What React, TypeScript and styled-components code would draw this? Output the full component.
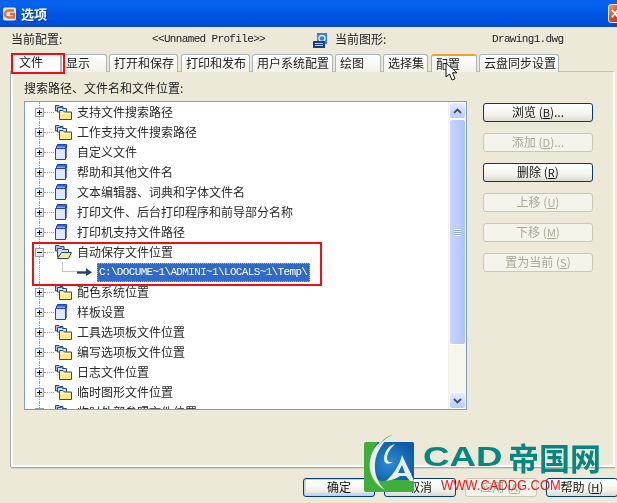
import React from "react";
import styled, { createGlobalStyle } from "styled-components";

const Global = createGlobalStyle`
  html, body {
    margin: 0;
    padding: 0;
    background: #ece9d8;
  }
  body {
    font-family: "Noto Sans CJK SC", "Liberation Sans", sans-serif;
    font-size: 12px;
    color: #222;
  }
`;

// the source capture is a soft, upscaled screenshot
const Window = styled.div`
  position: relative;
  width: 617px;
  height: 503px;
  overflow: hidden;
  background: #ece9d8;
  display: flex;
  flex-direction: column;
  filter: blur(0.3px);
`;

const TitleBar = styled.div`
  height: 27px;
  flex: none;
  display: flex;
  align-items: center;
  padding-left: 2px;
  background: linear-gradient(180deg, #0a5fe6 0%, #0466f0 12%, #0055e5 50%, #0050dc 85%, #0a46c0 100%);
`;

const TitleText = styled.span`
  margin-left: 3px;
  color: #fff;
  font-size: 13px;
  font-weight: 700;
  line-height: 27px;
  text-shadow: 1px 1px 0 #0a3aa0;
`;

const CloseButton = styled.div`
  margin-left: auto;
  width: 12px;
  height: 19px;
  margin-right: -3px;
  border: 1px solid #f4e4dc;
  border-radius: 3px 0 0 3px;
  background: linear-gradient(135deg, #e89a78, #d8502c 55%, #c23c18);
  display: flex;
  align-items: center;
  padding-left: 2px;
  box-sizing: border-box;
`;

const ProfileRow = styled.div`
  height: 27px;
  flex: none;
  display: grid;
  grid-template-columns: 141px 160px 23px 157px auto;
  align-items: center;
  padding-left: 11px;
`;

const ProfileLabel = styled.span`
  padding-bottom: 4px;
`;

const MonoText = styled.span`
  font-family: "Liberation Mono", "Noto Sans CJK SC", monospace;
  font-size: 11px;
  letter-spacing: -0.65px;
  color: #222;
  white-space: nowrap;
`;

const ProfileValue = styled(MonoText)`
  padding-bottom: 3px;
`;

const TabStrip = styled.div`
  height: 17px;
  flex: none;
  display: flex;
  padding-left: 12px;
  position: relative;
  z-index: 1;
`;

const Tab = styled.div<{ $width: number; $gap: number; $active?: boolean; $hot?: boolean }>`
  width: ${(p) => p.$width}px;
  margin-right: ${(p) => p.$gap}px;
  height: ${(p) => (p.$active ? 20 : 18)}px;
  margin-top: ${(p) => (p.$active ? -1 : 0)}px;
  box-sizing: border-box;
  padding-left: ${(p) => (p.$active ? 6 : 4)}px;
  border: 1px solid #a8b4bc;
  border-bottom: none;
  border-top: ${(p) => (p.$hot ? "2px solid #f0a030" : "1px solid #a8b4bc")};
  border-radius: 3px 3px 0 0;
  background: ${(p) => (p.$active ? "#fcfcfe" : "linear-gradient(180deg, #fff, #f2f1e8)")};
  line-height: 16px;
  white-space: nowrap;
`;

const Panel = styled.div`
  height: 396px;
  flex: none;
  box-sizing: border-box;
  margin: 0 2px 0 11px;
  padding: 10px 11px 0 11px;
  background: #ece9d8;
  border-top: 1px solid #b8c0c4;
  border-left: 2px solid #fff;
  border-right: 2px solid #fff;
  border-bottom: 2px solid #fff;
  box-shadow: -1px 0 0 #a8aca8, 0 1px 0 #a8aca8, 0 2px 0 #d4d2c4;
`;

const PanelLabel = styled.div`
  height: 19px;
  line-height: 12px;
  white-space: nowrap;
`;

const PanelBody = styled.div`
  display: flex;
  align-items: flex-start;
`;

const TreeBox = styled.div`
  width: 443px;
  height: 309px;
  box-sizing: border-box;
  border: 1px solid #7f9db9;
  background: #fff;
  display: flex;
  overflow: hidden;
`;

const TreeList = styled.div`
  flex: 1;
  overflow: hidden;
`;

const Row = styled.div`
  position: relative;
  height: 20px;
  display: flex;
  align-items: center;
  padding-left: 10px;
  white-space: nowrap;
  &::before {
    content: "";
    position: absolute;
    left: 14px;
    top: 0;
    bottom: 0;
    border-left: 1px dotted #a0a0a0;
  }
`;

const Toggle = styled.span`
  position: relative;
  z-index: 1;
  width: 9px;
  height: 9px;
  flex: none;
  box-sizing: border-box;
  border: 1px solid #8ea0b4;
  background: linear-gradient(135deg, #fff, #d8d8cc);
  display: flex;
  align-items: center;
  justify-content: center;
`;

const Dash = styled.span`
  width: 10px;
  flex: none;
  border-top: 1px dotted #a0a0a0;
`;

const RowLabel = styled.span`
  margin-left: 4px;
  padding-bottom: 2px;
  color: #2a2a2a;
`;

const PathRow = styled(Row)`
  padding-left: 37px;
`;

const Elbow = styled.span`
  width: 15px;
  height: 10px;
  margin-top: -10px;
  flex: none;
  border-left: 1px solid #c4c4c4;
  border-bottom: 1px solid #c4c4c4;
  box-sizing: border-box;
`;

const PathText = styled(MonoText)`
  margin-left: 4px;
  width: 213px;
  height: 19px;
  line-height: 18px;
  padding-left: 2px;
  box-sizing: border-box;
  background: #3169c6;
  color: #fff;
  outline: 1px dotted #c8a878;
  outline-offset: -1px;
`;

const ScrollBar = styled.div`
  width: 17px;
  flex: none;
  display: flex;
  flex-direction: column;
  background: #f6f5ee;
  border-left: 1px solid #f0efe6;
`;

const ScrollArrow = styled.div`
  height: 17px;
  flex: none;
  box-sizing: border-box;
  border: 1px solid #fff;
  border-radius: 3px;
  background: linear-gradient(180deg, #e4ecff, #b8ccf8);
  display: flex;
  align-items: center;
  justify-content: center;
`;

const ScrollThumb = styled.div`
  height: 226px;
  flex: none;
  box-sizing: border-box;
  border: 1px solid #fff;
  border-radius: 3px;
  background: linear-gradient(90deg, #c4d4fc, #b8ccfa 60%, #aec4f4);
  display: flex;
  align-items: center;
  justify-content: center;
`;

const ScrollGrip = styled.div`
  width: 7px;
  height: 7px;
  background: repeating-linear-gradient(180deg, #eef2fe 0 1px, #8faae8 1px 2px);
`;

const ScrollTrack = styled.div`
  flex: 1;
`;

const SideButtons = styled.div`
  margin-left: 16px;
  margin-top: 2px;
  width: 110px;
  display: flex;
  flex-direction: column;
  gap: 11px;
`;

const XpButton = styled.div<{ $disabled?: boolean; $width?: number }>`
  width: ${(p) => (p.$width ? `${p.$width}px` : "100%")};
  height: 19px;
  box-sizing: border-box;
  border: 1px solid ${(p) => (p.$disabled ? "#c9c7ba" : "#003c74")};
  border-radius: 3px;
  background: ${(p) => (p.$disabled ? "#f5f4ea" : "linear-gradient(180deg, #fff 0%, #f4f4ee 60%, #dcdad0 100%)")};
  color: ${(p) => (p.$disabled ? "#a8a898" : "#111")};
  font-size: 12px;
  line-height: 15px;
  text-align: center;
  white-space: nowrap;
  flex: none;
`;

const Key = styled.u`
  font-size: 11px;
`;

const Footer = styled.div`
  flex: none;
  display: flex;
  justify-content: flex-start;
  gap: 9px;
  padding: 11px 0 0 303px;
`;

const DefaultButton = styled(XpButton)`
  box-shadow: inset 0 0 0 1px #b8d0f4, inset 0 -1px 0 2px #c4d8f8;
`;

const RedBox = styled.div<{ $x: number; $y: number; $w: number; $h: number }>`
  position: absolute;
  left: ${(p) => p.$x}px;
  top: ${(p) => p.$y}px;
  width: ${(p) => p.$w}px;
  height: ${(p) => p.$h}px;
  box-sizing: border-box;
  border: 2px solid #ee0f14;
  pointer-events: none;
  z-index: 3;
`;

const Cursor = styled.svg`
  position: absolute;
  left: 445px;
  top: 62px;
  z-index: 4;
`;

const Watermark = styled.div`
  position: absolute;
  left: 364px;
  top: 435px;
  z-index: 5;
  display: flex;
  align-items: flex-start;
`;

const WatermarkBrand = styled.div`
  position: relative;
  margin-left: 7px;
  margin-top: 3px;
  display: flex;
  align-items: center;
  color: #05877f;
  font-family: "Noto Sans CJK SC", "Liberation Sans", sans-serif;
  font-size: 31px;
  font-weight: 700;
  line-height: 38px;
  white-space: nowrap;
`;

const WatermarkLatin = styled.span`
  display: inline-block;
  width: 85px;
  font-family: "Liberation Sans", sans-serif;
  font-size: 27px;
  transform: scaleX(1.36);
  transform-origin: left center;
`;

const WatermarkUrl = styled.div`
  position: absolute;
  left: 18px;
  top: 39px;
  color: #f01c24;
  font-family: "Liberation Sans", sans-serif;
  font-size: 15px;
  font-weight: 400;
  line-height: 16px;
  transform: scaleX(0.86);
  transform-origin: left center;
`;

const PlusIcon = () => (
  <svg width="7" height="7" viewBox="0 0 7 7">
    <path d="M1 3.5h5M3.5 1v5" stroke="#111" strokeWidth="1" />
  </svg>
);

const MinusIcon = () => (
  <svg width="7" height="7" viewBox="0 0 7 7">
    <path d="M1 3.5h5" stroke="#111" strokeWidth="1" />
  </svg>
);

const FolderIcon = () => (
  <svg width="19" height="18" viewBox="0 0 19 18" style={{ flex: "none" }}>
    <path d="M1.5 8V2.5h3.5l1 1h3v4z" fill="#aebfdc" stroke="#2c4c80" />
    <path d="M3.5 9V4.5h4l1 1h4v4z" fill="#cfdcf0" stroke="#2c4c80" />
    <path d="M5.5 7.5h3.5l1.5 1.5h7v7.5h-12z" fill="#fbe98c" stroke="#2c4c80" />
    <path d="M6.5 10.5h10" stroke="#fff8c8" />
  </svg>
);

const OpenFolderIcon = () => (
  <svg width="19" height="18" viewBox="0 0 19 18" style={{ flex: "none" }}>
    <path d="M1.5 8V2.5h3.5l1 1h4v4z" fill="#aebfdc" stroke="#2c4c80" />
    <path d="M3.5 14V5.5h4l1 1h6v3h-5z" fill="#cfdcf0" stroke="#2c4c80" />
    <path d="M3.5 15.5l4-6h10l-3 6z" fill="#fbe98c" stroke="#2c4c80" />
  </svg>
);

const DocIcon = () => (
  <svg width="19" height="18" viewBox="0 0 19 18" style={{ flex: "none" }}>
    <path d="M3.5 1.5h9v4h-9z" fill="#5c7ce8" stroke="#1c40c0" />
    <path d="M2.5 3h9v3h-9z" fill="#94b0f4" stroke="#1c40c0" />
    <path d="M1.5 5.5h10v11h-10z" fill="#dfe8ff" stroke="#1c40c0" />
    <path d="M12.5 5v10" stroke="#5c7ce8" />
  </svg>
);

const ArrowIcon = () => (
  <svg width="16" height="10" viewBox="0 0 16 10" style={{ flex: "none" }}>
    <path d="M0 5.5h10" stroke="#24406c" strokeWidth="2.4" />
    <path d="M9 1l6 4.5-6 3.5z" fill="#24406c" />
  </svg>
);

const AppIcon = () => (
  <svg width="16" height="16" viewBox="0 0 16 16">
    <rect x="1" y="1.5" width="13" height="13" rx="2" fill="#e8eef8" />
    <path d="M12 4.5H6.5a3.5 3.5 0 0 0 0 7H12V8H8" fill="none" stroke="#e07030" strokeWidth="2.4" />
  </svg>
);

const DwgIcon = () => (
  <svg width="17" height="17" viewBox="0 0 17 17">
    <path d="M5 1h10v11H5z" fill="#3c7cdc" />
    <circle cx="10" cy="6.5" r="3" fill="none" stroke="#e8f0ff" strokeWidth="1.4" />
    <path d="M1 9h12v7H1z" fill="#1c3c90" />
    <path d="M3 11.5h8M3 13.5h8" stroke="#b8c8f0" strokeWidth="1" />
  </svg>
);

const CloseGlyph = () => (
  <svg width="9" height="11" viewBox="0 0 9 11">
    <path d="M1 1.5l7 8M8 1.5l-7 8" stroke="#fff" strokeWidth="2" />
  </svg>
);

const UpGlyph = () => (
  <svg width="9" height="6" viewBox="0 0 9 6">
    <path d="M1 5l3.5-3.5L8 5" fill="none" stroke="#3c4c78" strokeWidth="1.8" />
  </svg>
);

const DownGlyph = () => (
  <svg width="9" height="6" viewBox="0 0 9 6">
    <path d="M1 1l3.5 3.5L8 1" fill="none" stroke="#3c4c78" strokeWidth="1.8" />
  </svg>
);

const CadLogo = () => (
  <svg width="52" height="58" viewBox="0 0 52 58" style={{ flex: "none" }}>
    <defs>
      <radialGradient id="logoBlue" cx="0.45" cy="0.55" r="0.6">
        <stop offset="0" stopColor="#2c8cd0" />
        <stop offset="1" stopColor="#0f5aa8" />
      </radialGradient>
    </defs>
    <rect x="0" y="7" width="50" height="50" rx="2" fill="#3fae3a" />
    <path d="M14 7h34a2 2 0 0 1 2 2v36H24C11 49 5 39 6 27 7 19 10 12 14 7z" fill="url(#logoBlue)" />
    <path d="M50 45v6l-12-1-8-5z" fill="#3fae3a" />
    <path d="M21 55C8 48 3 34 7 21 10 11 18 3 29 0 19 6 12 17 11 28c-1 11 3 20 10 27z" fill="#e8f0e8" />
    <path d="M13 14C16 8 21 3 29 0c-6 1-12 5-16 14z" fill="#3fae3a" />
    <path d="M31 9c-6 1-11 8-11 15 0 5 5 6 9 3-3 1-6 0-6-4 0-5 4-10 8-14z" fill="#e8f0e8" />
    <path d="M38 20c-2 9-8 19-16 26 7-1 11-3 14-5h6l4 5h4C47 38 42 29 38 20z" fill="#e8f0f4" />
    <path d="M38 30l3 8h-7z" fill="#1a68b4" />
  </svg>
);

type Kind = "folder" | "doc";

const groupA: { label: string; kind: Kind }[] = [
  { label: "支持文件搜索路径", kind: "folder" },
  { label: "工作支持文件搜索路径", kind: "folder" },
  { label: "自定义文件", kind: "doc" },
  { label: "帮助和其他文件名", kind: "doc" },
  { label: "文本编辑器、词典和字体文件名", kind: "doc" },
  { label: "打印文件、后台打印程序和前导部分名称", kind: "doc" },
  { label: "打印机支持文件路径", kind: "doc" },
];

const groupB: { label: string; kind: Kind }[] = [
  { label: "配色系统位置", kind: "folder" },
  { label: "样板设置", kind: "doc" },
  { label: "工具选项板文件位置", kind: "folder" },
  { label: "编写选项板文件位置", kind: "folder" },
  { label: "日志文件位置", kind: "folder" },
  { label: "临时图形文件位置", kind: "folder" },
  { label: "临时外部参照文件位置", kind: "folder" },
];

const tabs = [
  { label: "文件", width: 49, gap: 0, active: true },
  { label: "显示", width: 46, gap: 2 },
  { label: "打开和保存", width: 69, gap: 3 },
  { label: "打印和发布", width: 69, gap: 2 },
  { label: "用户系统配置", width: 81, gap: 2 },
  { label: "绘图", width: 46, gap: 2 },
  { label: "选择集", width: 45, gap: 3 },
  { label: "配置", width: 46, gap: 2, hot: true },
  { label: "云盘同步设置", width: 80, gap: 0 },
];

const sideButtons = [
  { label: "浏览", key: "B", dots: true },
  { label: "添加", key: "D", dots: true, disabled: true },
  { label: "删除", key: "R" },
  { label: "上移", key: "U", disabled: true },
  { label: "下移", key: "M", disabled: true },
  { label: "置为当前", key: "S", disabled: true },
];

const TreeRow = ({ label, kind }: { label: string; kind: Kind }) => (
  <Row>
    <Toggle>
      <PlusIcon />
    </Toggle>
    <Dash />
    {kind === "folder" ? <FolderIcon /> : <DocIcon />}
    <RowLabel>{label}</RowLabel>
  </Row>
);

const App: React.FC = () => {
  return (
    <Window>
      <Global />
      <TitleBar>
        <AppIcon />
        <TitleText>选项</TitleText>
        <CloseButton>
          <CloseGlyph />
        </CloseButton>
      </TitleBar>
      <ProfileRow>
        <ProfileLabel>当前配置:</ProfileLabel>
        <ProfileValue>&lt;&lt;Unnamed Profile&gt;&gt;</ProfileValue>
        <DwgIcon />
        <ProfileLabel>当前图形:</ProfileLabel>
        <ProfileValue>Drawing1.dwg</ProfileValue>
      </ProfileRow>
      <TabStrip>
        {tabs.map((t) => (
          <Tab key={t.label} $width={t.width} $gap={t.gap} $active={t.active} $hot={t.hot}>
            {t.label}
          </Tab>
        ))}
      </TabStrip>
      <Panel>
        <PanelLabel>搜索路径、文件名和文件位置:</PanelLabel>
        <PanelBody>
          <TreeBox>
            <TreeList>
              {groupA.map((r) => (
                <TreeRow key={r.label} {...r} />
              ))}
              <Row>
                <Toggle>
                  <MinusIcon />
                </Toggle>
                <Dash />
                <OpenFolderIcon />
                <RowLabel>自动保存文件位置</RowLabel>
              </Row>
              <PathRow>
                <Elbow />
                <ArrowIcon />
                <PathText>C:\DOCUME~1\ADMINI~1\LOCALS~1\Temp\</PathText>
              </PathRow>
              {groupB.map((r) => (
                <TreeRow key={r.label} {...r} />
              ))}
            </TreeList>
            <ScrollBar>
              <ScrollArrow>
                <UpGlyph />
              </ScrollArrow>
              <ScrollThumb>
                <ScrollGrip />
              </ScrollThumb>
              <ScrollTrack />
              <ScrollArrow>
                <DownGlyph />
              </ScrollArrow>
            </ScrollBar>
          </TreeBox>
          <SideButtons>
            {sideButtons.map((b) => (
              <XpButton key={b.key} $disabled={b.disabled}>
                {b.label} (<Key>{b.key}</Key>){b.dots ? "..." : ""}
              </XpButton>
            ))}
          </SideButtons>
        </PanelBody>
      </Panel>
      <Footer>
        <DefaultButton $width={72}>确定</DefaultButton>
        <XpButton $width={72}>取消</XpButton>
        <XpButton $width={72} $disabled>
          应用 (<Key>A</Key>)
        </XpButton>
        <XpButton $width={72}>
          帮助 (<Key>H</Key>)
        </XpButton>
      </Footer>
      <RedBox $x={11} $y={53} $w={54} $h={21} />
      <RedBox $x={32} $y={242} $w={290} $h={44} />
      <Cursor width="14" height="19" viewBox="0 0 14 19">
        <path d="M1 1v14l3.5-3 2.5 6 3-1.2-2.5-6H12z" fill="#fff" stroke="#111" strokeWidth="1" />
      </Cursor>
      <Watermark>
        <CadLogo />
        <WatermarkBrand>
          <WatermarkLatin>CAD</WatermarkLatin>
          帝国网
          <WatermarkUrl>WWW.CADDG.COM</WatermarkUrl>
        </WatermarkBrand>
      </Watermark>
    </Window>
  );
};

export default App;
